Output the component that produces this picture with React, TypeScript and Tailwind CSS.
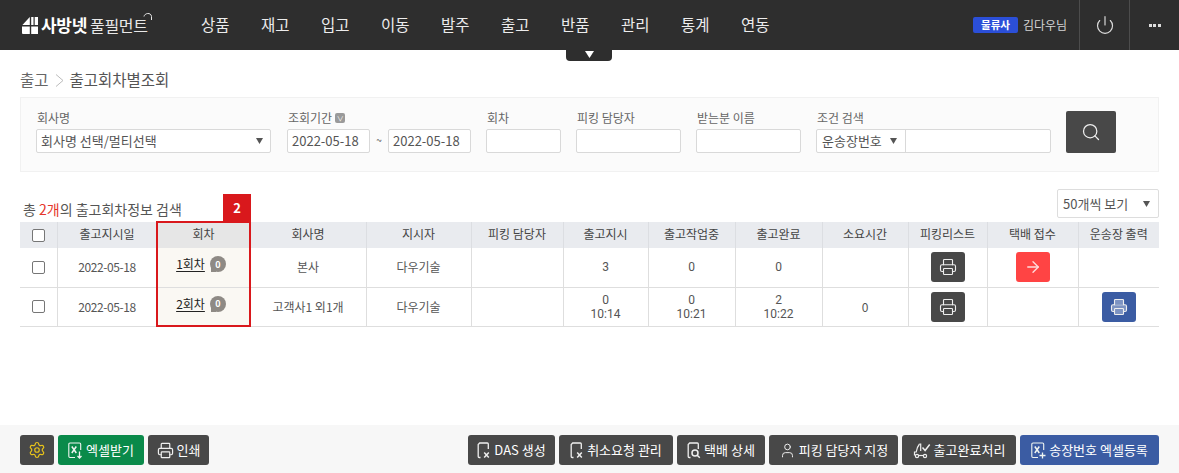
import type { ReactNode } from "react"
import { ArrowRight, Power, Printer, Search, Settings, User } from "lucide-react"

const MENUS = ["상품", "재고", "입고", "이동", "발주", "출고", "반품", "관리", "통계", "연동"]

const COLUMNS = [
  { label: "출고지시일", width: 100 },
  { label: "회차", width: 93 },
  { label: "회사명", width: 116 },
  { label: "지시자", width: 105 },
  { label: "피킹 담당자", width: 92 },
  { label: "출고지시", width: 85 },
  { label: "출고작업중", width: 87 },
  { label: "출고완료", width: 87 },
  { label: "소요시간", width: 86 },
  { label: "피킹리스트", width: 79 },
  { label: "택배 접수", width: 91 },
  { label: "운송장 출력", width: 81 },
]

const ROWS = [
  { round: "1회차", company: "본사", ordered: ["3"], working: ["0"], done: ["0"], time: "", arrow: true, label: false },
  { round: "2회차", company: "고객사1 외1개", ordered: ["0", "10:14"], working: ["0", "10:21"], done: ["2", "10:22"], time: "0", arrow: false, label: true },
]

function DocIcon({ mark }: { mark: "x" | "search" }) {
  return (
    <svg width="14" height="17" viewBox="0 0 14 17" fill="none" stroke="currentColor" strokeWidth="1.3" className="text-[#efefef]">
      <path d="M3.5 15.5H2.2a1 1 0 0 1-1-1V2.5l1.5-1.5h7.6a1 1 0 0 1 1 1V7" />
      {mark === "x" ? (
        <path d="M7.2 10.5l4.6 5M11.8 10.5l-4.6 5" strokeWidth="1.5" />
      ) : (
        <>
          <circle cx="8" cy="11" r="3" strokeWidth="1.5" />
          <path d="M10.2 13.2l2.6 2.6" strokeWidth="1.5" />
        </>
      )}
    </svg>
  )
}

function SheetIcon({ mark }: { mark: "down" | "plus" }) {
  return (
    <svg width="15" height="17" viewBox="0 0 15 17" fill="none" stroke="currentColor" strokeWidth="1.1" className="text-[#f0f5f1]">
      <path d="M7 15.5H2a1.2 1.2 0 0 1-1.2-1.2V2.2A1.2 1.2 0 0 1 2 1h9.5a1.2 1.2 0 0 1 1.2 1.2V8" />
      <path d="M3.8 4.5l4.5 6.5M8.3 4.5l-4.5 6.5" strokeWidth="1.5" />
      {mark === "down" ? (
        <path d="M11.5 9.5v6.5M9.5 14l2 2 2-2" strokeWidth="1.3" />
      ) : (
        <path d="M11.5 10.5v6M8.5 13.5h6" strokeWidth="1.3" />
      )}
    </svg>
  )
}

function TruckCheckIcon() {
  return (
    <svg width="18" height="17" viewBox="0 0 18 17" fill="none" stroke="#efefef" strokeWidth="1.2">
      <path d="M6.5 2C4.8 4 3.8 7 3.2 10H1.5v3h1" />
      <path d="M6.5 2h1.2v7" />
      <circle cx="4" cy="14" r="1.6" />
      <circle cx="12" cy="14" r="1.6" />
      <path d="M5.6 13.5h4.8" />
      <path d="M9.5 5.5l2.6 3 4.6-6" strokeWidth="1.5" />
    </svg>
  )
}

function LogoMark() {
  return (
    <svg width="16" height="17" viewBox="0 0 16 17" fill="#fff">
      <path d="M7.8 0v8H0.4zM7.8 9.4V17H1a1 1 0 0 1-1-1V9.4zM9.2 0h2.3v8H9.2zM12.7 0H16v8h-3.3zM9.2 9.4H16V17H9.2z" />
    </svg>
  )
}

function Caret() {
  return <svg width="7" height="6" viewBox="0 0 7 6" fill="#555"><path d="M0 0h7L3.5 6z" /></svg>
}

function Field({ label, className, children }: { label: ReactNode; className?: string; children?: ReactNode }) {
  return (
    <div className={`flex flex-col ${className ?? ""}`}>
      <div className="flex h-[19px] items-start gap-[3px] pl-[1px] text-[12px] leading-[16px] text-[#666]">{label}</div>
      {children ?? <div className="h-[24px] rounded-[2px] border border-[#d9d9d9] bg-white" />}
    </div>
  )
}

function FooterButton({ icon, label, width, tone = "dark" }: { icon: ReactNode; label?: string; width: number; tone?: "dark" | "green" | "blue" }) {
  const bg = tone === "green" ? "bg-[#0a8a4a]" : tone === "blue" ? "bg-[#3b5ca3]" : "bg-[#484848]"
  return (
    <button style={{ width }} className={`flex h-[30px] items-center justify-center gap-[3px] rounded-[3px] text-[13px] whitespace-nowrap text-white ${bg}`}>
      {icon}
      {label && <span>{label}</span>}
    </button>
  )
}

function RowButton({ tone, children }: { tone: string; children: ReactNode }) {
  return <button className={`mx-auto flex h-[30px] w-[34px] items-center justify-center rounded-[3px] text-[#eee] ${tone}`}>{children}</button>
}

function Lines({ values }: { values: string[] }) {
  return (
    <div className="font-['Roboto',sans-serif] leading-[14px]">
      {values.map((v) => <div key={v}>{v}</div>)}
    </div>
  )
}

export default function App() {
  return (
    <div className="flex h-[473px] w-[1179px] flex-col overflow-hidden bg-white font-['Noto_Sans_CJK_KR','Noto_Sans',sans-serif] text-[12px] text-[#555]">
      {/* Top bar */}
      <header className="relative flex h-[50px] shrink-0 items-center bg-[#2e2e2e]">
        <div className="flex w-[201px] items-center pl-[22px] text-white">
          <LogoMark />
          <span className="ml-[3px] text-[17px] font-bold tracking-[-0.3px]">사방넷</span>
          <span className="relative ml-[3px] text-[16px] tracking-[-0.3px] text-[#e8e8e8]">
            풀필먼트
            <svg width="10" height="9" viewBox="0 0 10 9" fill="none" stroke="#e8e8e8" className="absolute -top-[1px] -right-[5px]">
              <path d="M1 4.5C1.5 1 8 0 8.5 4.5V8" />
            </svg>
          </span>
        </div>
        <nav className="flex">
          {MENUS.map((m) => (
            <span key={m} className="w-[60px] text-[15.5px] text-[#ececec]">{m}</span>
          ))}
        </nav>
        <div className="ml-auto flex h-full items-center">
          <span className="flex h-[16px] w-[45px] items-center justify-center rounded-[2px] bg-[#2b4fd8] text-[10.5px] font-bold text-white">물류사</span>
          <span className="ml-[5px] w-[56px] text-[12px] text-[#d4d4d4]">김다우님</span>
          <div className="flex h-full w-[51px] items-center justify-center border-x border-[#4c4c4c]">
            <Power size={20} strokeWidth={1.4} className="text-[#dcdcdc]" />
          </div>
          <div className="flex w-[49px] items-center justify-center gap-[1.5px]">
            <i className="size-[3px] bg-[#ddd]" />
            <i className="size-[3px] bg-[#ddd]" />
            <i className="size-[3px] bg-[#ddd]" />
          </div>
        </div>
        {/* Menu toggle tab */}
        <div className="absolute top-[50px] left-[566px] flex h-[11px] w-[46px] items-start justify-center rounded-b-[4px] bg-[#2e2e2e] pt-[1px]">
          <svg width="9" height="7" viewBox="0 0 9 7" fill="#fff"><path d="M0 0h9L4.5 7z" /></svg>
        </div>
      </header>

      <main className="relative flex-1 px-[20px]">
        {/* Breadcrumb */}
        <div className="flex h-[47px] items-center gap-[6px] pt-[13px] text-[15.5px]">
          <span className="text-[#666]">출고</span>
          <svg width="9" height="13" viewBox="0 0 9 13" fill="none" stroke="#bbb"><path d="M1 0.5L8 6.5L1 12.5" /></svg>
          <span className="text-[#555]">출고회차별조회</span>
        </div>

        {/* Search panel */}
        <section className="flex h-[75px] items-start border border-[#f1f1f1] bg-[#fbfbfb] pt-[12px] pl-[15px]">
          <Field label="회사명" className="w-[235px]">
            <div className="flex h-[24px] items-center justify-between rounded-[2px] border border-[#d9d9d9] bg-white pr-[7px] pl-[4px] text-[13px]">
              <span>회사명 선택/멀티선택</span>
              <Caret />
            </div>
          </Field>
          <Field
            className="ml-[16px] w-[184px]"
            label={
              <>
                조회기간
                <span className="mt-[3px] flex size-[10px] items-center justify-center rounded-[2px] bg-[#9a9a9a] text-[7px] leading-none text-white">∨</span>
              </>
            }
          >
            <div className="flex items-center text-[13px]">
              <div className="flex h-[24px] w-[83px] items-center rounded-[2px] border border-[#d9d9d9] bg-white pl-[4px]">2022-05-18</div>
              <span className="w-[18px] -translate-y-[2px] text-center text-[10px]">~</span>
              <div className="flex h-[24px] w-[83px] items-center rounded-[2px] border border-[#d9d9d9] bg-white pl-[4px]">2022-05-18</div>
            </div>
          </Field>
          <Field label="회차" className="ml-[15px] w-[75px]" />
          <Field label="피킹 담당자" className="ml-[15px] w-[105px]" />
          <Field label="받는분 이름" className="ml-[15px] w-[105px]" />
          <Field label="조건 검색" className="ml-[15px] w-[235px]">
            <div className="flex h-[24px] rounded-[2px] border border-[#d9d9d9] bg-white text-[13px]">
              <div className="flex w-[89px] items-center justify-between border-r border-[#d9d9d9] pr-[8px] pl-[5px]">
                <span>운송장번호</span>
                <Caret />
              </div>
            </div>
          </Field>
          <button className="mt-[1px] ml-[15px] flex h-[42px] w-[50px] items-center justify-center rounded-[2px] bg-[#484848] text-[#eee]">
            <Search size={20} strokeWidth={1.5} />
          </button>
        </section>

        {/* Result summary */}
        <div className="flex h-[50px] items-end justify-between pb-[4px]">
          <span className="pl-[3px] text-[14px] leading-[18px]">
            총 <span className="text-[#e5352b]">2개</span>의 출고회차정보 검색
          </span>
          <div className="flex h-[29px] w-[102px] items-center justify-between rounded-[2px] border border-[#ddd] bg-white pr-[8px] pl-[5px] text-[13px]">
            <span>50개씩 보기</span>
            <Caret />
          </div>
        </div>

        {/* Round table */}
        <table className="w-full table-fixed border-collapse">
          <colgroup>
            <col className="w-[37px]" />
            {COLUMNS.map((c) => <col key={c.label} style={{ width: c.width }} />)}
          </colgroup>
          <thead>
            <tr className="h-[26px] bg-[#e9ebef]">
              <th className="border-r border-[#dcdee2] font-normal">
                <div className="mx-auto size-[13px] rounded-[2px] border border-[#767676] bg-white" />
              </th>
              {COLUMNS.map((c) => (
                <th key={c.label} className={`border-r border-[#dcdee2] pb-[3px] font-normal text-[#444] last:border-r-0 ${c.label === "회차" ? "bg-[#e6e6e6]" : ""}`}>{c.label}</th>
              ))}
            </tr>
          </thead>
          <tbody>
            {ROWS.map((r) => (
              <tr key={r.round} className="h-[39px] border-b border-[#dedede] text-center">
                <td className="border-r border-[#dedede]">
                  <div className="mx-auto size-[13px] rounded-[2px] border border-[#767676] bg-white" />
                </td>
                <td className="border-r border-[#dedede] tracking-[-0.4px]">2022-05-18</td>
                <td className="border-r border-[#dedede] bg-[#faf8f3]">
                  <div className="flex -translate-y-[3px] items-center justify-center gap-[5px] pr-[5px]">
                    <span className="text-[#222] underline underline-offset-2">{r.round}</span>
                    <span className="relative flex size-[16px] items-center justify-center rounded-full bg-[#8e8a85] text-[9px] font-bold text-white">
                      0
                      <i className="absolute bottom-0 left-[1px] size-[5px] bg-[#8e8a85]" />
                    </span>
                  </div>
                </td>
                <td className="border-r border-[#dedede]">{r.company}</td>
                <td className="border-r border-[#dedede]">다우기술</td>
                <td className="border-r border-[#dedede]" />
                <td className="border-r border-[#dedede]"><Lines values={r.ordered} /></td>
                <td className="border-r border-[#dedede]"><Lines values={r.working} /></td>
                <td className="border-r border-[#dedede]"><Lines values={r.done} /></td>
                <td className="border-r border-[#dedede]">{r.time}</td>
                <td className="border-r border-[#dedede]">
                  <RowButton tone="bg-[#484848]"><Printer size={18} strokeWidth={1.5} /></RowButton>
                </td>
                <td className="border-r border-[#dedede]">
                  {r.arrow && <RowButton tone="bg-[#ff4444]"><ArrowRight size={18} strokeWidth={1.8} className="text-[#ffdcdc]" /></RowButton>}
                </td>
                <td>
                  {r.label && <RowButton tone="bg-[#3b5ca3]"><Printer size={18} strokeWidth={1.5} className="fill-[#7d93c2]" /></RowButton>}
                </td>
              </tr>
            ))}
          </tbody>
        </table>

        {/* Callout over the round column */}
        <div className="absolute top-[171px] left-[156px] h-[106px] w-[95px] border-2 border-[#d9181c]" />
        <div className="absolute top-[144px] left-[223px] flex h-[28px] w-[28px] items-center justify-center bg-[#d9181c] text-[13px] font-bold text-white">2</div>
      </main>

      {/* Action bar */}
      <footer className="flex h-[48px] shrink-0 items-center justify-between bg-[#f7f7f7] px-[20px] pt-[2px]">
        <div className="flex gap-[4px]">
          <FooterButton width={34} icon={<Settings size={18} strokeWidth={1.6} className="text-[#e8c31a]" />} />
          <FooterButton width={86} tone="green" icon={<SheetIcon mark="down" />} label="엑셀받기" />
          <FooterButton width={61} icon={<Printer size={17} strokeWidth={1.7} className="text-[#efefef]" />} label="인쇄" />
        </div>
        <div className="flex gap-[4px]">
          <FooterButton width={87} icon={<DocIcon mark="x" />} label="DAS 생성" />
          <FooterButton width={114} icon={<DocIcon mark="x" />} label="취소요청 관리" />
          <FooterButton width={88} icon={<DocIcon mark="search" />} label="택배 상세" />
          <FooterButton width={129} icon={<User size={17} strokeWidth={1.4} className="text-[#efefef]" />} label="피킹 담당자 지정" />
          <FooterButton width={114} icon={<TruckCheckIcon />} label="출고완료처리" />
          <FooterButton width={139} tone="blue" icon={<SheetIcon mark="plus" />} label="송장번호 엑셀등록" />
        </div>
      </footer>
    </div>
  )
}
